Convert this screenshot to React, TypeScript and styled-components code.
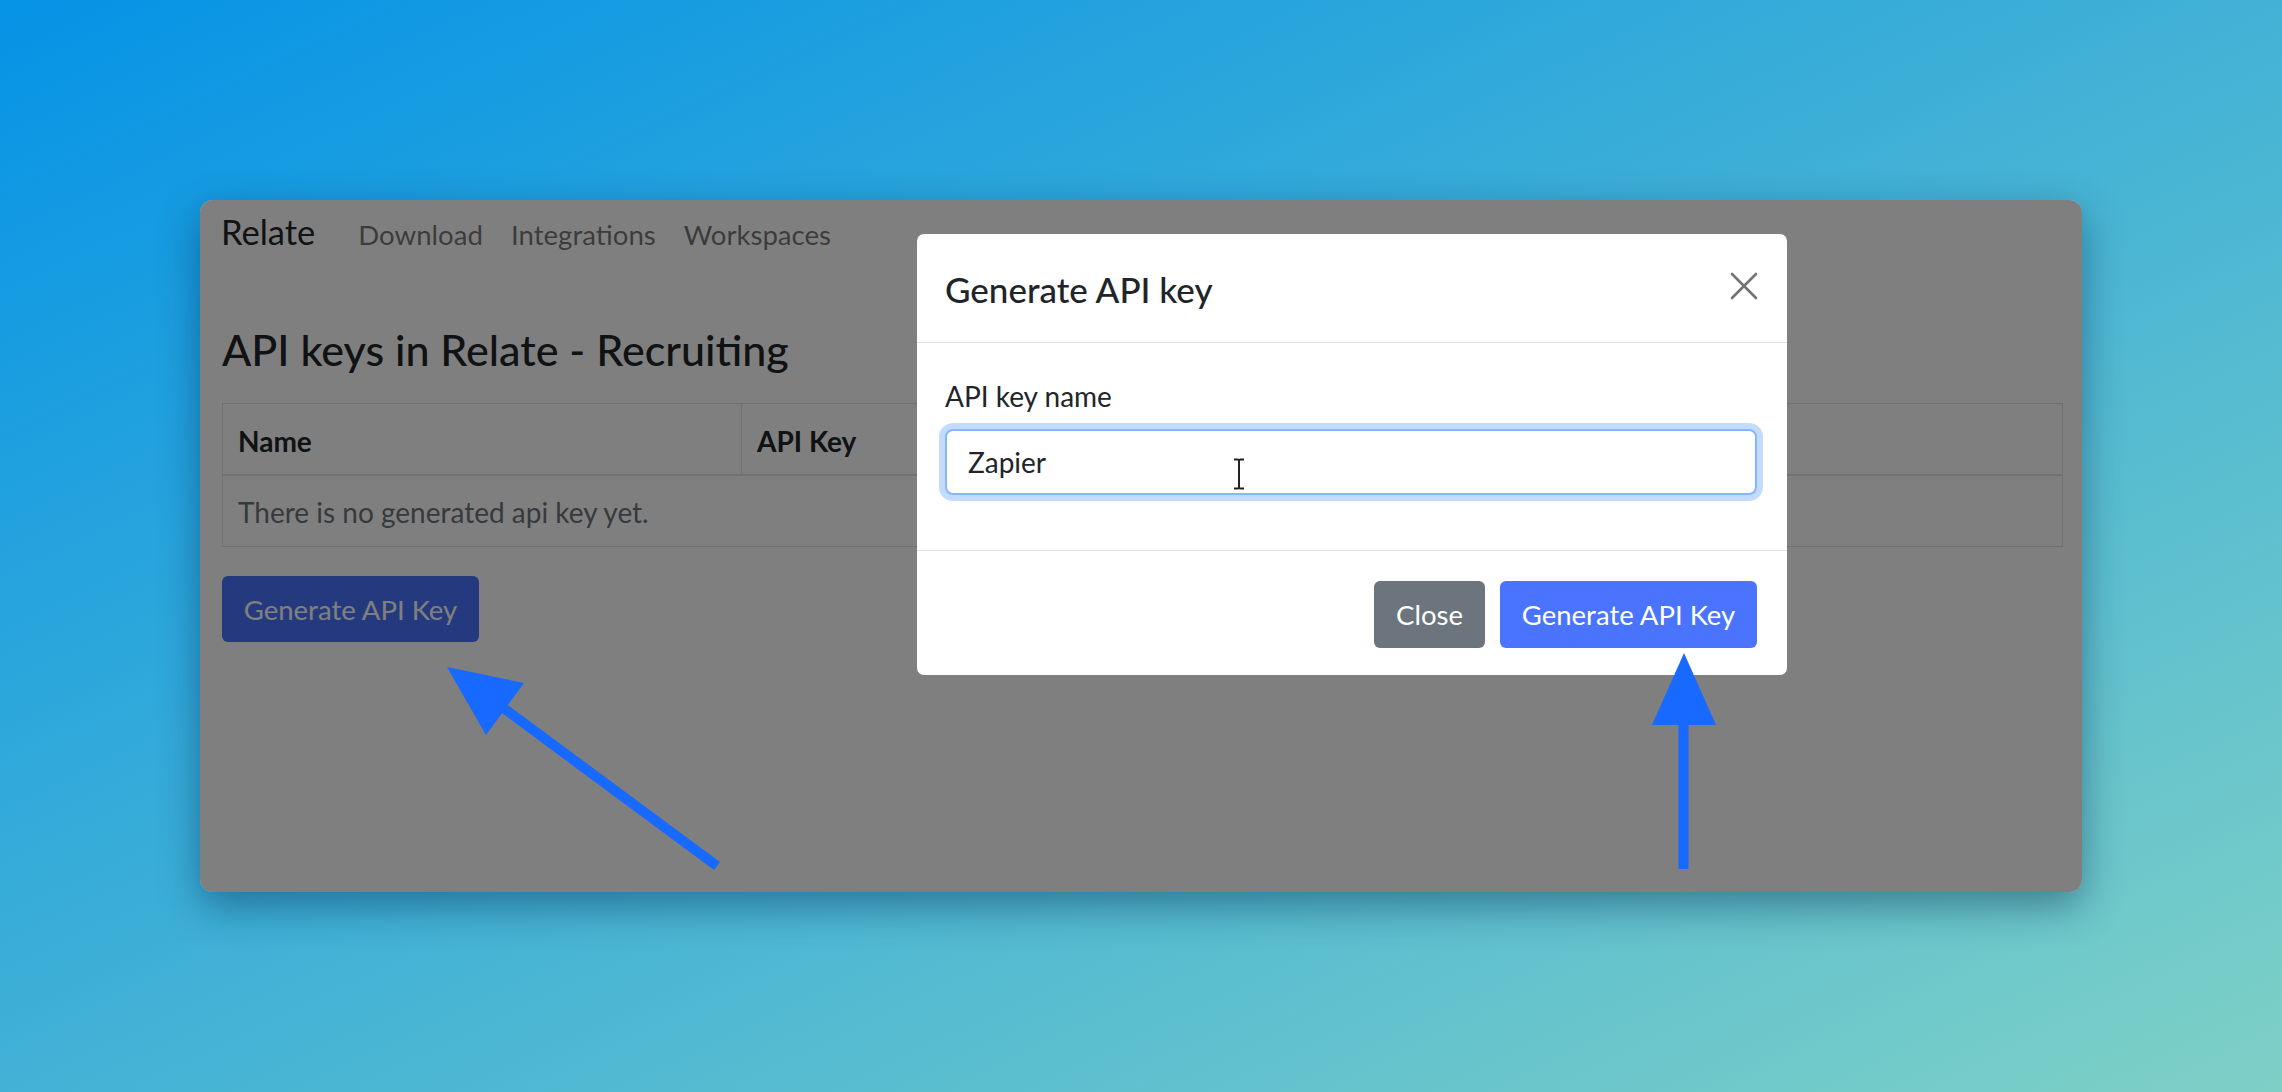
import React from 'react';
import styled, { createGlobalStyle } from 'styled-components';

const GlobalStyle = createGlobalStyle`
  html, body {
    margin: 0;
    padding: 0;
    width: 2282px;
    height: 1092px;
    overflow: hidden;
  }
  body {
    font-family: Lato, "Noto Sans", sans-serif;
    background: linear-gradient(to bottom right, #0593e6, #7ed0c6);
  }
  * {
    box-sizing: border-box;
  }
`;

const Stage = styled.div`
  position: relative;
  width: 2282px;
  height: 1092px;
  padding: 200px 0 0 200px;
`;

const Window = styled.div`
  position: relative;
  width: 1882px;
  height: 692px;
  border-radius: 13px;
  overflow: hidden;
  background: #ffffff;
  box-shadow: 0 14px 40px rgba(0, 40, 80, 0.45);
`;

const Page = styled.div`
  display: flex;
  flex-direction: column;
  padding: 0 19px 0 22px;
  color: #212529;
`;

const Nav = styled.nav`
  display: flex;
  align-items: baseline;
  height: 70px;
  padding-top: 12px;
  margin-left: -1px;
`;

const Brand = styled.span`
  font-size: 34.5px;
  line-height: 40px;
  margin-right: 43px;
`;

const NavLink = styled.span`
  font-size: 27.6px;
  line-height: 40px;
  color: rgba(0, 0, 0, 0.55);
  margin-right: 28px;
`;

const Heading = styled.h3`
  margin: 51px 0 0;
  font-size: 43px;
  line-height: 58px;
  font-weight: 500;
`;

const Table = styled.table`
  margin-top: 24px;
  width: 100%;
  border-collapse: collapse;
  font-size: 28px;
`;

const Th = styled.th<{ $width?: number }>`
  width: ${(p) => (p.$width ? `${p.$width}px` : 'auto')};
  height: 71px;
  padding: 4px 15px 0;
  text-align: left;
  font-weight: 700;
  border: 1px solid #dee2e6;
  border-bottom: 2px solid #dee2e6;
`;

const Td = styled.td`
  height: 72px;
  padding: 3px 15px 0;
  color: #6c757d;
  border: 1px solid #dee2e6;
`;

const Button = styled.button<{ $variant?: 'primary' | 'secondary' }>`
  height: 67px;
  padding: 0 20px;
  border: none;
  border-radius: 6px;
  font-family: inherit;
  font-size: 27.5px;
  color: #ffffff;
  background: ${(p) => (p.$variant === 'secondary' ? '#6c757d' : '#4a74fd')};
`;

const PageButton = styled(Button)`
  align-self: flex-start;
  margin-top: 29px;
  height: 66px;
  width: 257px;
`;

const Backdrop = styled.div`
  position: absolute;
  inset: 0;
  background: rgba(0, 0, 0, 0.5);
`;

const Modal = styled.div`
  position: absolute;
  left: 717px;
  top: 34px;
  width: 870px;
  height: 441px;
  background: #ffffff;
  border-radius: 7px;
  display: flex;
  flex-direction: column;
  color: #212529;
`;

const ModalHeader = styled.div`
  display: flex;
  align-items: center;
  justify-content: space-between;
  height: 109px;
  padding: 0 29px 0 28px;
  border-bottom: 1px solid #dee2e6;
`;

const ModalTitle = styled.h5`
  margin: 0;
  font-size: 35px;
  line-height: 44px;
  font-weight: 500;
  margin-top: 2px;
`;

const CloseIcon = styled.svg`
  width: 28px;
  height: 28px;
  margin-top: -4px;
`;

const ModalBody = styled.div`
  height: 208px;
  padding: 35px 30px 0 28px;
  border-bottom: 1px solid #dee2e6;
`;

const Label = styled.label`
  display: block;
  font-size: 28px;
  line-height: 36px;
  margin-bottom: 15px;
`;

const InputWrap = styled.div`
  position: relative;
`;

const Input = styled.input`
  display: block;
  width: 100%;
  height: 66px;
  padding: 0 21px;
  font-family: inherit;
  font-size: 28px;
  color: #212529;
  border: 2px solid #86b7fe;
  border-radius: 8px;
  outline: none;
  box-shadow: 0 0 0 6px rgba(13, 110, 253, 0.25);
`;

const Cursor = styled.svg`
  position: absolute;
  left: 288px;
  top: 29px;
  width: 12px;
  height: 32px;
`;

const ModalFooter = styled.div`
  display: flex;
  justify-content: flex-end;
  gap: 15px;
  padding: 30px 30px 0 0;
`;

const Arrows = styled.svg`
  position: absolute;
  left: 0;
  top: 0;
  pointer-events: none;
`;

const App: React.FC = () => {
  return (
    <>
      <GlobalStyle />
      <Stage>
        <Window>
          <Page>
            <Nav>
              <Brand>Relate</Brand>
              <NavLink>Download</NavLink>
              <NavLink>Integrations</NavLink>
              <NavLink>Workspaces</NavLink>
            </Nav>
            <Heading>API keys in Relate - Recruiting</Heading>
            <Table>
              <thead>
                <tr>
                  <Th $width={519}>Name</Th>
                  <Th>API Key</Th>
                </tr>
              </thead>
              <tbody>
                <tr>
                  <Td colSpan={2}>There is no generated api key yet.</Td>
                </tr>
              </tbody>
            </Table>
            <PageButton>Generate API Key</PageButton>
          </Page>

          <Backdrop />

          <Modal>
            <ModalHeader>
              <ModalTitle>Generate API key</ModalTitle>
              <CloseIcon viewBox="0 0 28 28">
                <path d="M2 2 L26 26 M26 2 L2 26" stroke="#737373" strokeWidth="2.6" strokeLinecap="round" />
              </CloseIcon>
            </ModalHeader>
            <ModalBody>
              <Label>API key name</Label>
              <InputWrap>
                <Input defaultValue="Zapier" />
                <Cursor viewBox="0 0 12 32">
                  <path d="M1 1.5 H4.5 Q6 1.5 6 3 V29 Q6 30.5 4.5 30.5 H1 M11 1.5 H7.5 Q6 1.5 6 3 M6 29 Q6 30.5 7.5 30.5 H11" fill="none" stroke="#222" strokeWidth="2" />
                </Cursor>
              </InputWrap>
            </ModalBody>
            <ModalFooter>
              <Button $variant="secondary" style={{ width: 111 }}>Close</Button>
              <Button style={{ width: 257 }}>Generate API Key</Button>
            </ModalFooter>
          </Modal>
        </Window>

        <Arrows width="2282" height="1092" viewBox="0 0 2282 1092">
          <g fill="#1769ff" stroke="none">
            <polygon points="447,667 524,683 486,735" />
            <polygon points="1684,653 1652,725 1716,725" />
          </g>
          <g stroke="#1769ff" strokeWidth="10" strokeLinecap="butt">
            <line x1="498" y1="704" x2="717" y2="866" />
            <line x1="1683.5" y1="720" x2="1683.5" y2="869" />
          </g>
        </Arrows>
      </Stage>
    </>
  );
};

export default App;
